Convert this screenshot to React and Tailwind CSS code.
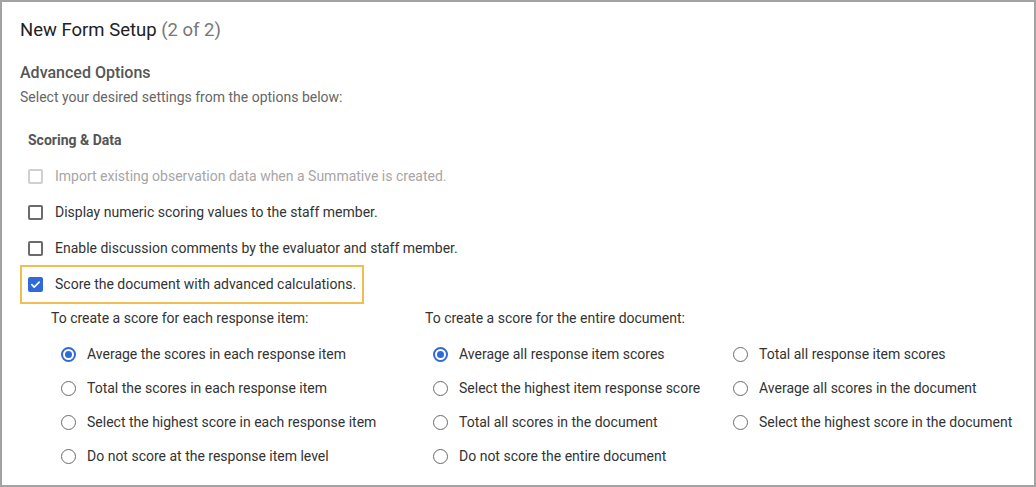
import React from "react";

const itemOptions = [
  "Average the scores in each response item",
  "Total the scores in each response item",
  "Select the highest score in each response item",
  "Do not score at the response item level",
];

const docOptions = [
  ["Average all response item scores", "Total all response item scores"],
  ["Select the highest item response score", "Average all scores in the document"],
  ["Total all scores in the document", "Select the highest score in the document"],
  ["Do not score the entire document", null],
];

function Checkbox({ checked, disabled }) {
  if (checked) {
    return (
      <span className="w-[15px] h-[15px] rounded-[2px] bg-[#2f6ad8] flex items-center justify-center shrink-0">
        <svg width="11" height="11" viewBox="0 0 12 12" fill="none">
          <path d="M2 6.2l2.6 2.6L10 3.4" stroke="white" strokeWidth="1.8" strokeLinecap="round" strokeLinejoin="round" />
        </svg>
      </span>
    );
  }
  return (
    <span
      className={
        "w-[15px] h-[15px] rounded-[2px] border-2 shrink-0 " +
        (disabled ? "border-[#d0d0d0]" : "border-[#6b6b6b]")
      }
    />
  );
}

function Radio({ checked }) {
  return checked ? (
    <span className="w-[15px] h-[15px] rounded-full border-2 border-[#2f6ad8] flex items-center justify-center shrink-0">
      <span className="w-[7px] h-[7px] rounded-full bg-[#2f6ad8]" />
    </span>
  ) : (
    <span className="w-[15px] h-[15px] rounded-full border-[1.5px] border-[#6b6b6b] shrink-0" />
  );
}

function RadioRow({ label, checked }) {
  return (
    <div className="h-[34px] flex items-center gap-[11px]">
      <Radio checked={checked} />
      <span>{label}</span>
    </div>
  );
}

export default function App() {
  return (
    <div
      className="w-[1036px] h-[487px] border-2 border-[#a3a3a3] bg-white text-[#333] overflow-hidden"
      style={{ fontFamily: "Roboto, 'Liberation Sans', sans-serif" }}
    >
      <div className="px-[18px] pt-[16px]">
        <h1 className="text-[18.5px] leading-6 text-[#222]">
          New Form Setup <span className="text-[#777]">(2 of 2)</span>
        </h1>

        <h2 className="mt-[20px] text-[16px] leading-[22px] font-medium text-[#555]">Advanced Options</h2>
        <p className="mt-[3px] text-[14px] leading-5 text-[#666]">Select your desired settings from the options below:</p>

        <h3 className="mt-[23px] ml-2 text-[14px] leading-5 font-bold text-[#555]">Scoring &amp; Data</h3>

        <div className="mt-[8px] text-[14px]">
          <div className="h-9 flex items-center gap-[12px] pl-2 text-[#a6a6a6]">
            <Checkbox disabled />
            <span>Import existing observation data when a Summative is created.</span>
          </div>
          <div className="h-9 flex items-center gap-[12px] pl-2">
            <Checkbox />
            <span>Display numeric scoring values to the staff member.</span>
          </div>
          <div className="h-9 flex items-center gap-[12px] pl-2">
            <Checkbox />
            <span>Enable discussion comments by the evaluator and staff member.</span>
          </div>
          <div className="h-[39px] -mt-[1px] w-[344px] border-2 border-[#f0bd4f] flex items-center gap-[12px] pl-[6px]">
            <Checkbox checked />
            <span>Score the document with advanced calculations.</span>
          </div>
        </div>

        <div className="mt-[4px] flex text-[14px]">
          <div className="w-[405px] pl-[31px]">
            <div className="h-5 leading-5">To create a score for each response item:</div>
            <div className="mt-[9px] pl-[10px]">
              {itemOptions.map((o, i) => (
                <RadioRow key={o} label={o} checked={i === 0} />
              ))}
            </div>
          </div>
          <div className="flex-1">
            <div className="h-5 leading-5">To create a score for the entire document:</div>
            <div className="mt-[9px] pl-[8px] grid grid-cols-[300px_1fr]">
              {docOptions.map(([a, b], i) => (
                <React.Fragment key={a}>
                  <RadioRow label={a} checked={i === 0} />
                  {b ? <RadioRow label={b} /> : <div />}
                </React.Fragment>
              ))}
            </div>
          </div>
        </div>
      </div>
    </div>
  );
}
